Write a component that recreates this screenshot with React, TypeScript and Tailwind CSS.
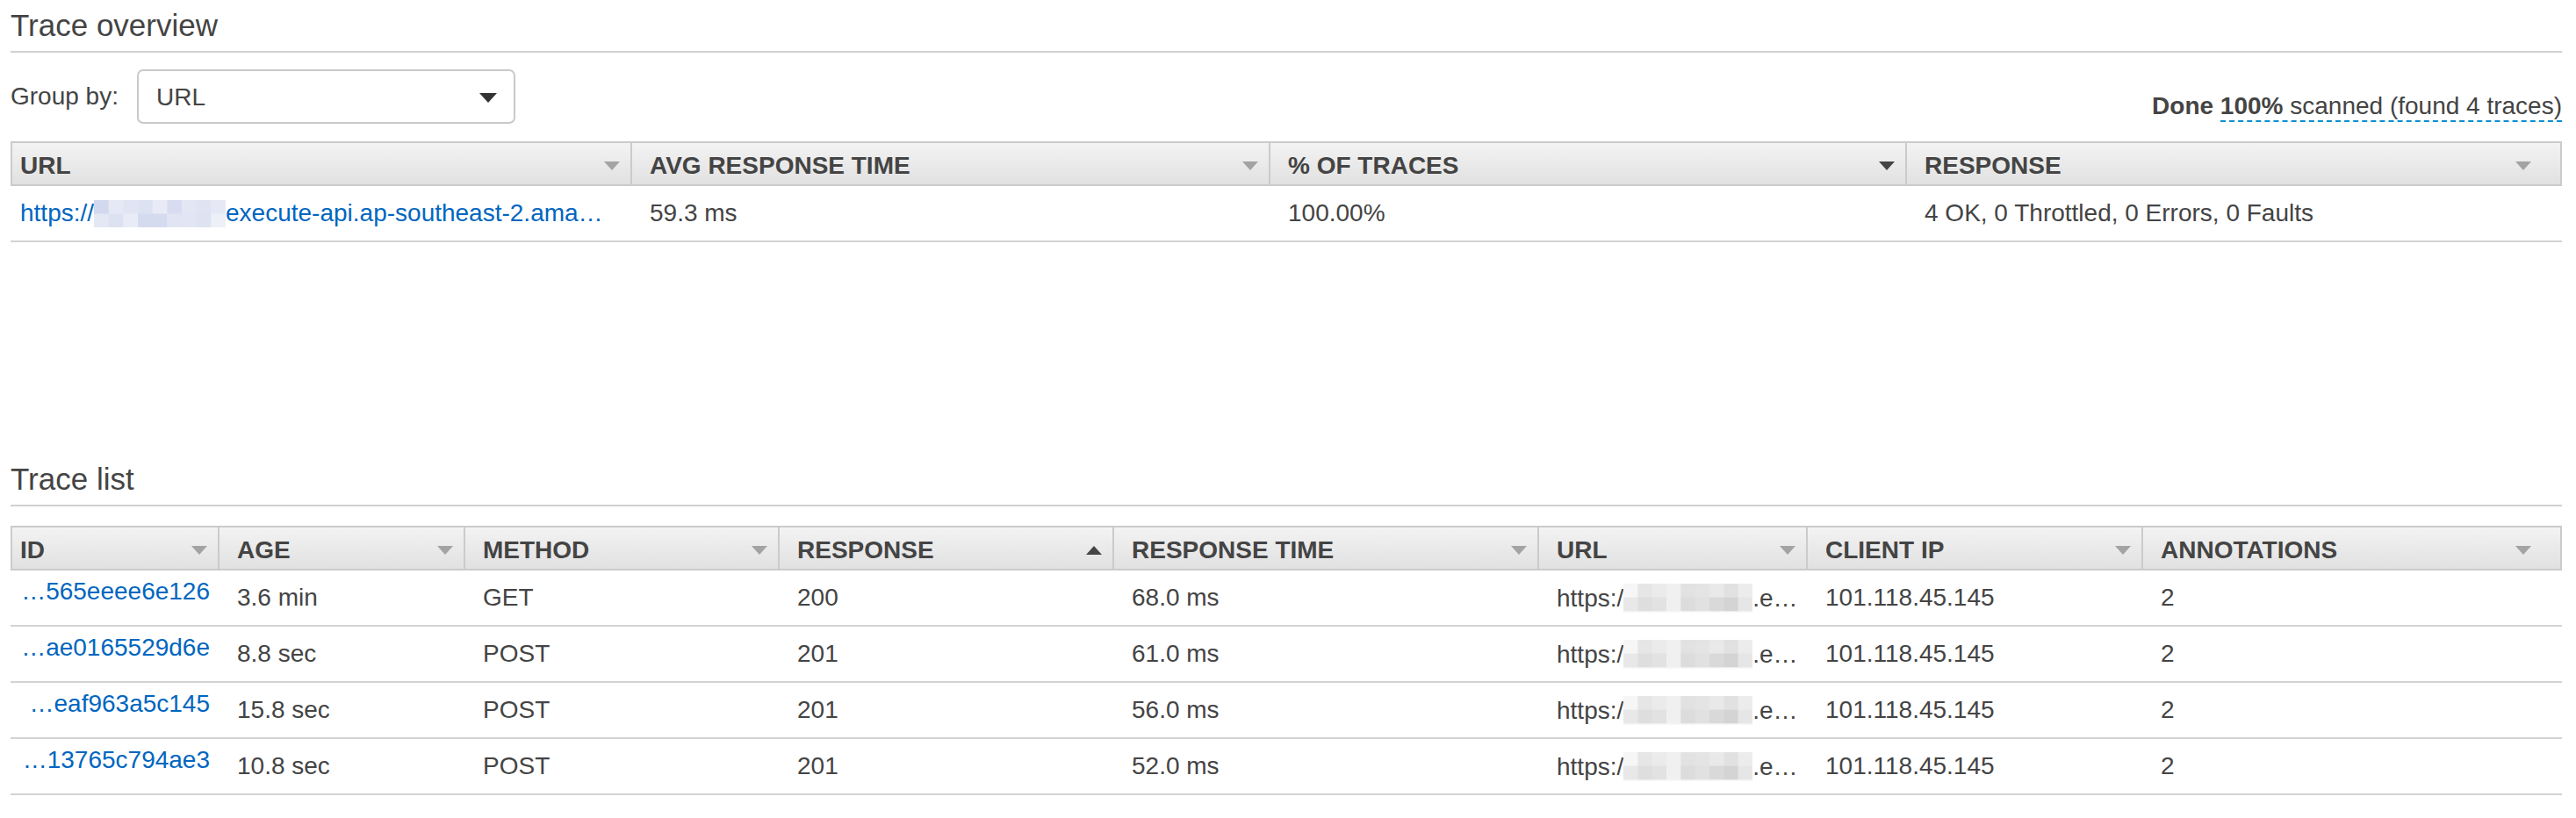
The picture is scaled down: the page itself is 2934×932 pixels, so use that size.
import clsx from "clsx";

type Col = { label: string; sort?: "down" | "up" | "down-active" };

const overviewCols: Col[] = [
  { label: "URL" },
  { label: "AVG RESPONSE TIME" },
  { label: "% OF TRACES", sort: "down-active" },
  { label: "RESPONSE" },
];

const traceCols: Col[] = [
  { label: "ID" },
  { label: "AGE" },
  { label: "METHOD" },
  { label: "RESPONSE", sort: "up" },
  { label: "RESPONSE TIME" },
  { label: "URL" },
  { label: "CLIENT IP" },
  { label: "ANNOTATIONS" },
];

const traces = [
  { id: "…565eeee6e126", age: "3.6 min", method: "GET", status: "200", time: "68.0 ms" },
  { id: "…ae0165529d6e", age: "8.8 sec", method: "POST", status: "201", time: "61.0 ms" },
  { id: "…eaf963a5c145", age: "15.8 sec", method: "POST", status: "201", time: "56.0 ms" },
  { id: "…13765c794ae3", age: "10.8 sec", method: "POST", status: "201", time: "52.0 ms" },
];

const blueBlur = [
  ["#d2d9ee", "#e6e9f5", "#e0e4f3", "#dde2f2", "#e8ebf6", "#d7dcf0", "#e3e7f4", "#dfe3f2", "#e6e9f5"],
  ["#e4e8f5", "#dde2f2", "#e9ecf6", "#d5dbef", "#d5dbef", "#e0e4f3", "#e2e6f4", "#dee3f2", "#eef0f8"],
];

const grayBlur = [
  ["#f6f6f6", "#e6e6e6", "#ebebeb", "#f0f0f0", "#e2e2e2", "#e4e4e4", "#e9e9e9", "#e1e1e1", "#ececec"],
  ["#e8e8e8", "#dedede", "#e2e2e2", "#f0f0f0", "#dcdcdc", "#e1e1e1", "#d9d9d9", "#d4d4d4", "#e6e6e6"],
  ["#f7f7f7", "#f7f7f7", "#f7f7f7", "#f7f7f7", "#f7f7f7", "#f7f7f7", "#f7f7f7", "#f7f7f7", "#f7f7f7"],
];

function Mosaic({ cells, w, h, className }: { cells: string[][]; w: number; h: number; className?: string }) {
  const cw = w / cells[0].length;
  const ch = h / cells.length;
  return (
    <svg width={w} height={h} className={clsx("inline-block", className)}>
      {cells.map((row, i) =>
        row.map((c, j) => <rect key={`${i}-${j}`} x={j * cw} y={i * ch} width={cw + 0.5} height={ch + 0.5} fill={c} />)
      )}
    </svg>
  );
}

function SortIcon({ sort }: { sort?: Col["sort"] }) {
  const up = sort === "up";
  const dark = sort === "up" || sort === "down-active";
  return (
    <svg width="18" height="10" viewBox="0 0 18 10" className="shrink-0">
      <path d={up ? "M0 10H18L9 0Z" : "M0 0H18L9 10Z"} fill={dark ? "#444444" : "#a3a3a3"} />
    </svg>
  );
}

function TableHeader({ cols, template }: { cols: Col[]; template: string }) {
  return (
    <div className={clsx("grid h-[51px] border-y-2 border-[#cbcbcb] bg-linear-to-b from-[#f3f3f3] to-[#e1e1e1]", template)}>
      {cols.map((c, i) => (
        <div
          key={c.label + i}
          className={clsx(
            "flex items-center justify-between border-l-2 border-[#cbcbcb] pt-[5px]",
            i === 0 ? "pl-[9px]" : "pl-[20px]",
            i === cols.length - 1 ? "border-r-2 pr-[33px]" : "pr-[12px]"
          )}
        >
          <span className="whitespace-nowrap text-[28px] leading-[32px] font-bold text-[#444]">{c.label}</span>
          <SortIcon sort={c.sort} />
        </div>
      ))}
    </div>
  );
}

function SectionTitle({ children }: { children: string }) {
  return (
    <h2 className="border-b-2 border-[#d0d0d0] pt-[9px] pb-[9px] text-[35px] leading-[40px] font-normal text-[#444]">
      {children}
    </h2>
  );
}

const overviewTemplate = "grid-cols-[706px_727px_725px_748px]";
const traceTemplate = "grid-cols-[236px_280px_358px_381px_484px_306px_382px_479px]";

export default function App() {
  return (
    <div className="min-h-[932px] w-[2934px] bg-white pr-[16px] pl-[12px] font-['Liberation_Sans',Arial,sans-serif] text-[28px] leading-[32px] text-[#444]">
      <section>
        <SectionTitle>Trace overview</SectionTitle>

        <div className="mt-[19px] flex h-[62px] items-end justify-between">
          <div className="flex h-full items-center gap-[21px]">
            <span>Group by:</span>
            <div className="flex h-[62px] w-[431px] items-center justify-between rounded-[7px] border-2 border-[#c9c9c9] pt-[2px] pr-[19px] pl-[20px]">
              <span>URL</span>
              <svg width="20" height="11" viewBox="0 0 20 11">
                <path d="M0 0H20L10 11Z" fill="#333333" />
              </svg>
            </div>
          </div>
          <div className="mb-[2px] whitespace-nowrap">
            <span className="font-bold">Done </span>
            <span className="inline-block border-b-2 border-dashed border-[#0a8fd0]">
              <span className="font-bold">100%</span> scanned (found 4 traces)
            </span>
          </div>
        </div>

        <div className="mt-[20px]">
          <TableHeader cols={overviewCols} template={overviewTemplate} />
          <div className={clsx("grid h-[64px] items-center border-b-2 border-[#d3d3d3]", overviewTemplate)}>
            <div className="overflow-hidden pl-[11px] whitespace-nowrap text-[#0066c0]">
              https://
              <Mosaic cells={blueBlur} w={150} h={31} className="align-[-7px]" />
              execute-api.ap-southeast-2.ama…
            </div>
            <div className="pl-[22px]">59.3 ms</div>
            <div className="pl-[22px]">100.00%</div>
            <div className="pl-[22px]">4 OK, 0 Throttled, 0 Errors, 0 Faults</div>
          </div>
        </div>
      </section>

      <section className="mt-[241px]">
        <SectionTitle>Trace list</SectionTitle>
        <div className="mt-[22px]">
          <TableHeader cols={traceCols} template={traceTemplate} />
          {traces.map((t) => (
            <div key={t.id} className={clsx("grid h-[64px] items-center border-b-2 border-[#d3d3d3]", traceTemplate)}>
              <div className="mb-[14px] pr-[9px] text-right whitespace-nowrap text-[#0066c0]">{t.id}</div>
              <div className="pl-[22px]">{t.age}</div>
              <div className="pl-[22px]">{t.method}</div>
              <div className="pl-[22px]">{t.status}</div>
              <div className="pl-[22px]">{t.time}</div>
              <div className="overflow-hidden pl-[22px] whitespace-nowrap">
                https:/
                <Mosaic cells={grayBlur} w={147} h={47} className="mb-[-15px] align-[-6px]" />
                .e…
              </div>
              <div className="pl-[22px]">101.118.45.145</div>
              <div className="pl-[22px]">2</div>
            </div>
          ))}
        </div>
      </section>
    </div>
  );
}
